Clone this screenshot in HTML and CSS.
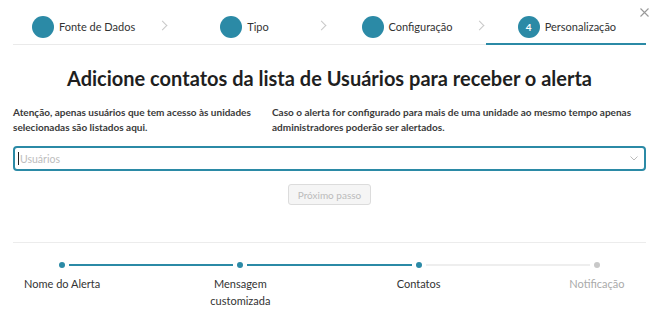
FILE: index.html
```html
<!DOCTYPE html>
<html lang="pt-BR">
<head>
    <meta charset="UTF-8">
    <meta name="viewport" content="width=device-width, initial-scale=1.0">
    <title>Novo alerta - Personalização</title>
    <link rel="stylesheet" href="styles.css">
</head>
<body>
    <div class="modal">
        <button class="close" aria-label="Fechar">
            <svg width="9" height="9" viewBox="0 0 9 9"><path d="M0.5 0.5L8.5 8.5M8.5 0.5L0.5 8.5" stroke="#999" stroke-width="1.1"/></svg>
        </button>

        <nav class="steps">
            <div class="step s1"><span class="dot"></span><span class="step-label">Fonte de Dados</span><span class="chev"></span></div>
            <div class="step s2"><span class="dot"></span><span class="step-label">Tipo</span><span class="chev"></span></div>
            <div class="step s3"><span class="dot"></span><span class="step-label">Configuração</span><span class="chev"></span></div>
            <div class="step s4 active"><span class="dot">4</span><span class="step-label">Personalização</span></div>
        </nav>

        <h1>Adicione contatos da lista de Usuários para receber o alerta</h1>

        <div class="notes">
            <p>Atenção, apenas usuários que tem acesso às unidades selecionadas são listados aqui.</p>
            <p>Caso o alerta for configurado para mais de uma unidade ao mesmo tempo apenas administradores poderão ser alertados.</p>
        </div>

        <div class="select">
            <span class="caret"></span>
            <span class="placeholder">Usuários</span>
            <svg class="arrow" width="8" height="5" viewBox="0 0 8 5"><path d="M0.5 0.5L4 4L7.5 0.5" fill="none" stroke="#bbb" stroke-width="1"/></svg>
        </div>

        <div class="actions">
            <button class="next" disabled>Próximo passo</button>
        </div>

        <hr class="divider">

        <div class="progress">
            <div class="pstep done"><span class="pdot"></span><span class="plabel">Nome do Alerta</span></div>
            <div class="pstep done"><span class="pdot"></span><span class="plabel">Mensagem<br>customizada</span></div>
            <div class="pstep current"><span class="pdot"></span><span class="plabel">Contatos</span></div>
            <div class="pstep todo"><span class="pdot"></span><span class="plabel">Notificação</span></div>
        </div>
    </div>
</body>
</html>
```

FILE: styles.css
```css
* { box-sizing: border-box; }
body { margin: 0; background: #fff; font-family: Lato, "Open Sans", sans-serif; color: #333; }
.modal { position: relative; width: 663px; height: 321px; padding: 0 17px 0 13px; overflow: hidden; }
.close { position: absolute; top: 8px; right: 14px; background: none; border: none; padding: 0; line-height: 0; cursor: pointer; }

.steps { display: grid; grid-template-columns: repeat(4, 1fr); height: 45px; border-bottom: 1px solid #eaeaea; }
.step { position: relative; display: flex; align-items: center; padding-top: 9px; font-size: 11px; color: #333; }
.s1 { padding-left: 19px; }
.s2 { padding-left: 49px; }
.s3 { padding-left: 32px; }
.s4 { padding-left: 30px; }
.dot { width: 22px; height: 22px; border-radius: 50%; background: #2b8aa6; color: #fff; font-size: 10px; font-weight: 700; display: flex; align-items: center; justify-content: center; margin-right: 5px; flex: none; }
.chev { position: absolute; right: 5px; top: 22px; width: 7px; height: 7px; border-top: 1px solid #c8c8c8; border-right: 1px solid #c8c8c8; transform: rotate(45deg); }
.step.active::after { content: ""; position: absolute; left: -2px; right: 0; bottom: -1px; height: 2px; background: #2b8aa6; }

h1 { margin: 19px 0 0; text-align: center; font-size: 20px; font-weight: 700; color: #1f1f1f; line-height: 28px; }

.notes { display: grid; grid-template-columns: 259px 1fr; margin-top: 13px; }
.notes p { margin: 0; font-size: 10px; font-weight: 700; line-height: 15px; color: #3a3a3a; }

.select { display: flex; align-items: center; height: 25px; margin-top: 11px; border: 2px solid #2b8aa6; border-radius: 4px; padding: 0 6px 0 3px; }
.caret { width: 1px; height: 13px; background: #222; margin-right: 1px; }
.placeholder { flex: 1; font-size: 10.5px; color: #bdbdbd; }

.actions { display: flex; justify-content: center; margin-top: 13px; }
.next { width: 83px; height: 21px; font-family: inherit; font-size: 10px; color: #bbb; background: #f5f5f5; border: 1px solid #dcdcdc; border-radius: 3px; padding: 0; }

.divider { margin: 37px 0 0; border: none; border-top: 1px solid #ececec; }

.progress { display: grid; grid-template-columns: repeat(4, 1fr); margin: 0 -40px; padding-top: 19px; }
.pstep { position: relative; display: flex; flex-direction: column; align-items: center; }
.pdot { width: 6px; height: 6px; border-radius: 50%; background: #2b8aa6; }
.plabel { margin-top: 7px; font-size: 11px; line-height: 17px; text-align: center; color: #333; }
.pstep::after { content: ""; position: absolute; top: 2px; left: calc(50% + 7px); width: calc(100% - 14px); height: 2px; background: #2b8aa6; }
.pstep.current::after { background: #eee; }
.pstep.todo::after { display: none; }
.pstep.todo .pdot { background: #c8c8c8; }
.pstep.todo .plabel { color: #aaa; }
```
